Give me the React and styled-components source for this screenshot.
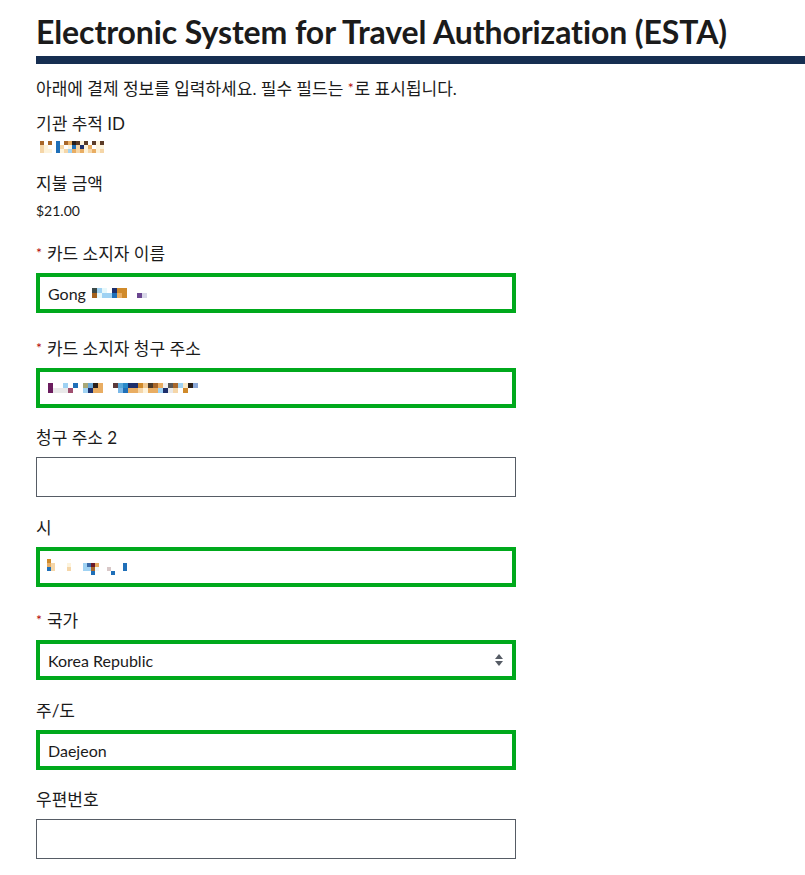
import React from "react";
import styled, { createGlobalStyle } from "styled-components";

const GlobalStyle = createGlobalStyle`
  html, body { margin: 0; padding: 0; background: #ffffff; }
  body {
    font-family: "Lato", "Noto Sans CJK KR", sans-serif;
    color: #1b1b1b;
    overflow: hidden;
  }
`;

const Page = styled.main`
  padding: 12px 0 0 36px;
`;

const Title = styled.h1`
  margin: 0;
  font-family: "Lato", "Noto Sans CJK KR", sans-serif;
  font-weight: 700;
  font-size: 32px;
  line-height: 40px;
  letter-spacing: -0.1px;
  color: #1b1b1b;
  white-space: nowrap;
`;

const Rule = styled.div`
  height: 8px;
  background: #162e51;
  margin-top: 4px;
`;

const Intro = styled.p`
  margin: 13px 0 0;
  font-size: 17px;
  line-height: 22px;
`;

const Req = styled.span`
  color: #b50909;
  font-size: 14px;
  vertical-align: 2px;
  margin-right: ${(p) => (p.$tight ? 1 : 5)}px;
`;

const InfoLabel = styled.div`
  margin-top: ${(p) => p.$top}px;
  font-size: 17px;
  line-height: 22px;
`;

const InfoValue = styled.div`
  margin-top: ${(p) => p.$top}px;
  font-size: 14px;
  line-height: 20px;
  height: ${(p) => p.$h || 20}px;
  display: flex;
  align-items: center;
`;

const Field = styled.div`
  margin-top: ${(p) => p.$top}px;
  width: 480px;
`;

const Label = styled.label`
  display: block;
  font-size: 17px;
  line-height: 22px;
`;

const Box = styled.div`
  margin-top: 8px;
  box-sizing: border-box;
  height: 40px;
  width: 480px;
  border: ${(p) => (p.$ok ? "4px solid #00a91c" : "1px solid #565c65")};
  display: flex;
  align-items: center;
  padding: 0 ${(p) => (p.$ok ? 8 : 11)}px;
  font-size: 16px;
  color: #1b1b1b;
  background: #fff;
  gap: 4px;
`;

const Spacer = styled.div`
  flex: 1;
`;

const Mosaic = ({ rows, cell = 4, style }) => {
  const w = Math.max(...rows.map((r) => r.length)) * cell;
  const h = rows.length * cell;
  return (
    <svg width={w} height={h} style={style}>
      {rows.map((r, y) =>
        r.map((c, x) =>
          c ? <rect key={x + "-" + y} x={x * cell} y={y * cell} width={cell} height={cell} fill={c} /> : null
        )
      )}
    </svg>
  );
};

const B = "#a8672a", L = "#f5d6a8", C = "#fdf3dc", U = "#1f6fb8", K = "#2a1f1a", D = "#5b3b26",
  N = "#1d2f6b", S = "#9fd2f3", O = "#e9ad62", P = "#6b1d5e", G = "#e9e9e9", T = "#d08a2a", M = "#6a4690";

const trackRows = [
  [B, 0, B, 0, U, 0, B, O, K, D, C, D, 0, D, C, D, 0],
  [L, C, 0, 0, U, L, 0, C, U, L, N, C, O, 0, C, C, 0],
  [L, C, C, 0, U, C, L, S, O, L, O, C, L, O, C, L, 0],
];

const nameRows = [
  ["#3c4a48", S, "#e6f8fb", 0, N, T, T],
  ["#a5621d", "#e8f8fb", S, S, U, O, T],
];
const nameRows2 = [
  [0, 0],
  [M, "#d8d8e8"],
];

const addrRows = [
  [P, 0, 0, S, 0, U, 0, "#a8a878", "#6aa7d4", K, O, 0, 0, "#5a3a3a", "#5aa8d8", "#2a8ac8", N, N, T, "#f0c890", "#4a3a2a", B, O, "#f0f0f0", "#5a5a5a", B, S, "#f8e8c8", K, "#8aa8d8"],
  [P, G, G, G, "#a05070", 0, 0, S, N, O, O, 0, 0, 0, "#7ab8e8", U, O, O, L, C, O, O, S, N, "#e8e8e8", L, 0, T, 0, 0],
];

const cityRows = [
  [T, 0, 0, 0, 0, 0, 0, 0, 0, 0, 0, 0, 0, 0, 0, 0, 0, 0, 0, 0],
  [O, L, 0, 0, 0, C, 0, 0, 0, S, "#3a6aa8", "#6a1a2a", O, 0, 0, 0, 0, 0, 0, U],
  [U, L, 0, 0, 0, L, 0, 0, 0, S, S, B, "#f0f8f8", 0, 0, "#d8c8c8", 0, 0, 0, U],
  [0, 0, 0, 0, 0, 0, 0, 0, 0, 0, 0, U, 0, 0, 0, 0, U, 0, 0, 0],
];

const SelectArrows = () => (
  <svg width="10" height="14" viewBox="0 0 10 14">
    <path d="M5 1 L9 6 L1 6 Z" fill="#565c65" />
    <path d="M5 13 L9 8 L1 8 Z" fill="#565c65" />
  </svg>
);

export default function App() {
  return (
    <>
      <GlobalStyle />
      <Page>
        <Title>Electronic System for Travel Authorization (ESTA)</Title>
        <Rule />
        <Intro>
          아래에 결제 정보를 입력하세요. 필수 필드는 <Req $tight>*</Req>로 표시됩니다.
        </Intro>

        <InfoLabel $top={13}>기관 추적 ID</InfoLabel>
        <InfoValue $top={5} $h={14}>
          <Mosaic rows={trackRows} style={{ marginLeft: 4 }} />
        </InfoValue>

        <InfoLabel $top={19}>지불 금액</InfoLabel>
        <InfoValue $top={6}>$21.00</InfoValue>

        <Field $top={21}>
          <Label>
            <Req>*</Req>카드 소지자 이름
          </Label>
          <Box $ok>
            <span>Gong</span>
            <Mosaic rows={nameRows} cell={5} style={{ marginLeft: 2 }} />
            <Mosaic rows={nameRows2} cell={5} style={{ marginLeft: 6 }} />
          </Box>
        </Field>

        <Field $top={24}>
          <Label>
            <Req>*</Req>카드 소지자 청구 주소
          </Label>
          <Box $ok>
            <Mosaic rows={addrRows} cell={5} />
          </Box>
        </Field>

        <Field $top={19}>
          <Label>청구 주소 2</Label>
          <Box />
        </Field>

        <Field $top={20}>
          <Label>시</Label>
          <Box $ok>
            <Mosaic rows={cityRows} cell={4} style={{ marginLeft: -1 }} />
          </Box>
        </Field>

        <Field $top={22}>
          <Label>
            <Req>*</Req>국가
          </Label>
          <Box $ok>
            <span>Korea Republic</span>
            <Spacer />
            <SelectArrows />
          </Box>
        </Field>

        <Field $top={20}>
          <Label>주/도</Label>
          <Box $ok>
            <span>Daejeon</span>
          </Box>
        </Field>

        <Field $top={19}>
          <Label>우편번호</Label>
          <Box />
        </Field>
      </Page>
    </>
  );
}
